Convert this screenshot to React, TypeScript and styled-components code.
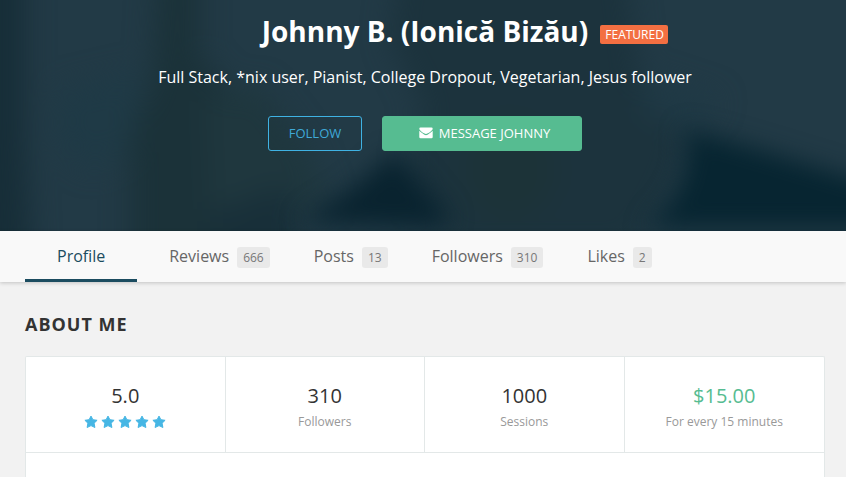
import React from "react";
import styled, { createGlobalStyle } from "styled-components";

const GlobalStyle = createGlobalStyle`
  *, *::before, *::after { box-sizing: border-box; }
  html, body { margin: 0; background: #f2f2f2; }
  body {
    font-family: "Open Sans", sans-serif;
    color: #333;
    overflow-x: hidden;
  }
  button, h1, h2, p, dl, dd, dt { margin: 0; font-family: inherit; }
`;

const Page = styled.div`
  min-height: 100vh;
  display: flex;
  flex-direction: column;
`;

const Hero = styled.header`
  position: relative;
  flex: none;
  display: flex;
  flex-direction: column;
  align-items: center;
  padding: 11px 21px 80px 25px;
  background: #223a46;
  color: #fff;
  text-align: center;
`;

const Backdrop = styled.svg`
  position: absolute;
  inset: 0;
  width: 100%;
  height: 100%;
`;

const Name = styled.h1`
  position: relative;
  font-size: 28px;
  line-height: 40px;
  font-weight: 700;
`;

const Featured = styled.span`
  position: absolute;
  left: 100%;
  top: 14px;
  margin-left: 12px;
  padding: 0 4px 0 5px;
  border-radius: 2px;
  background: #f36f42;
  font-size: 12px;
  line-height: 19px;
  font-weight: 400;
`;

const Headline = styled.p`
  position: relative;
  margin-top: 14px;
  font-size: 16px;
  line-height: 24px;
`;

const Actions = styled.div`
  position: relative;
  display: flex;
  gap: 20px;
  margin-top: 27px;
`;

const ActionButton = styled.button<{ $primary?: boolean }>`
  display: flex;
  align-items: center;
  justify-content: center;
  gap: 6px;
  width: ${(p) => (p.$primary ? 200 : 94)}px;
  height: 35px;
  padding: 0 0 1px ${(p) => (p.$primary ? 5 : 0)}px;
  border: 1px solid ${(p) => (p.$primary ? "#56bc91" : "#3fb2e3")};
  border-radius: 3px;
  background: ${(p) => (p.$primary ? "#56bc91" : "transparent")};
  color: ${(p) => (p.$primary ? "#fff" : "#3fa9d8")};
  font-size: 13px;
  line-height: 20px;
  font-weight: 400;
  cursor: pointer;
`;

const Tabs = styled.nav`
  position: relative;
  flex: none;
  display: flex;
  height: 51px;
  padding: 0 21px 0 25px;
  background: #f9f9f9;
  box-shadow: 0 1px 4px rgba(0, 0, 0, 0.2);
`;

const Tab = styled.a<{ $active?: boolean }>`
  display: flex;
  align-items: center;
  gap: 8px;
  padding: 2px ${(p) => (p.$active ? 32 : 12)}px 0 32px;
  border-bottom: 3px solid ${(p) => (p.$active ? "#1b4c60" : "transparent")};
  color: ${(p) => (p.$active ? "#1b4c60" : "#666")};
  font-size: 16px;
  line-height: 24px;
  text-decoration: none;
`;

const Count = styled.span`
  margin-top: 3px;
  padding: 0 6px;
  border-radius: 3px;
  background: #e9e9e9;
  color: #777;
  font-size: 12px;
  line-height: 21px;
`;

const Content = styled.main`
  flex: 1;
  display: flex;
  flex-direction: column;
  padding: 30px 21px 0 25px;
`;

const SectionTitle = styled.h2`
  font-size: 18px;
  line-height: 24px;
  font-weight: 700;
  letter-spacing: 1px;
`;

const Card = styled.section`
  flex: 1;
  margin-top: 20px;
  border: 1px solid #e3e8e8;
  border-bottom: 0;
  border-radius: 2px 2px 0 0;
  background: #fff;
`;

const Stats = styled.dl`
  display: grid;
  grid-template-columns: repeat(4, 1fr);
  border-bottom: 1px solid #e3e8e8;
`;

const Stat = styled.div`
  display: flex;
  flex-direction: column;
  align-items: center;
  height: 95px;
  padding-top: 24px;
  border-right: 1px solid #e3e8e8;
  &:last-child { border-right: 0; }
`;

const Value = styled.dd<{ $accent?: boolean }>`
  order: 1;
  font-size: 20px;
  line-height: 30px;
  color: ${(p) => (p.$accent ? "#56bc91" : "#333")};
`;

const Label = styled.dt`
  order: 2;
  font-size: 12px;
  line-height: 22px;
  color: #999;
`;

const Stars = styled.dt`
  order: 2;
  display: flex;
  gap: 3px;
  padding-top: 4px;
`;

function HeroBackdrop() {
  return (
    <Backdrop viewBox="0 0 846 231" preserveAspectRatio="none" aria-hidden="true">
      <defs>
        <filter id="soft" x="-50%" y="-50%" width="200%" height="200%" colorInterpolationFilters="sRGB">
          <feGaussianBlur stdDeviation="14" />
        </filter>
        <filter id="edge" x="-50%" y="-50%" width="200%" height="200%" colorInterpolationFilters="sRGB">
          <feGaussianBlur stdDeviation="12" />
        </filter>
      </defs>
      <rect width="846" height="231" fill="#223a46" />
      <g filter="url(#soft)">
        <path d="M-40-40H25V130L32 270H-40Z" fill="#172e38" />
        <path d="M60 90L145 70L130 150L90 170L55 140Z" fill="#1f3a46" />
        <path d="M158-40H200V55L245 105L300 160V270H130V140L152 80Z" fill="#1b3239" />
        <path d="M205 100L260 85L310 150L330 205L210 210Z" fill="#1f373e" />
        <path d="M400-40H625L640 80L680 130Q690 170 630 250H455Q400 190 410 145L425 110L390 40Z" fill="#1c333d" />
        <ellipse cx="510" cy="170" rx="45" ry="50" fill="#1c3338" />
        <path d="M210 215L285 185L300 250H210Z" fill="#182f39" />
        <path d="M645 75L720 100L690 135L640 110Z" fill="#1f3945" />
      </g>
      <g filter="url(#edge)">
        <path d="M300 222L350 190L395 152L415 175L450 218L440 228Z" fill="#09232f" />
        <path d="M684 128L760 150L846 176L900 190V228H645Q700 185 684 128Z" fill="#072531" />
      </g>
    </Backdrop>
  );
}

function Envelope() {
  return (
    <svg width="14" height="12" viewBox="0 0 14 12" aria-hidden="true">
      <path
        fill="#fff"
        d="M1.5.6h11A1.2 1.2 0 0 1 13.7 1.8C13.7 3.2 9 7 7 7S.3 3.2.3 1.8A1.2 1.2 0 0 1 1.5.6ZM.3 3.8C2.5 5.5 5 8.2 7 8.2S11.5 5.5 13.7 3.8v6.3a1.2 1.2 0 0 1-1.2 1.2h-11A1.2 1.2 0 0 1 .3 10.1Z"
      />
    </svg>
  );
}

function Star() {
  return (
    <svg width="14" height="14" viewBox="0 0 14 14" aria-hidden="true">
      <path
        fill="#46b6e4"
        stroke="#46b6e4"
        strokeWidth="1"
        strokeLinejoin="round"
        d="M7 1.1l1.9 3.6 4.2.6-3 2.9.8 4.3L7 10.6l-3.9 1.9.8-4.3L.9 5.3l4.2-.6Z"
      />
    </svg>
  );
}

const tabs = [
  { label: "Profile" },
  { label: "Reviews", count: 666 },
  { label: "Posts", count: 13 },
  { label: "Followers", count: 310 },
  { label: "Likes", count: 2 },
];

export default function App() {
  return (
    <Page>
      <GlobalStyle />
      <Hero>
        <HeroBackdrop />
        <Name>
          Johnny B. (Ionică Bizău)
          <Featured>FEATURED</Featured>
        </Name>
        <Headline>Full Stack, *nix user, Pianist, College Dropout, Vegetarian, Jesus follower</Headline>
        <Actions>
          <ActionButton type="button">FOLLOW</ActionButton>
          <ActionButton type="button" $primary>
            <Envelope />
            MESSAGE JOHNNY
          </ActionButton>
        </Actions>
      </Hero>
      <Tabs aria-label="Profile sections">
        {tabs.map(({ label, count }) => (
          <Tab
            key={label}
            href={`#${label.toLowerCase()}`}
            $active={count === undefined}
            aria-current={count === undefined ? "page" : undefined}
          >
            {label}
            {count !== undefined && <Count>{count}</Count>}
          </Tab>
        ))}
      </Tabs>
      <Content>
        <SectionTitle>ABOUT ME</SectionTitle>
        <Card>
          <Stats>
            <Stat>
              <Stars aria-label="Rating">
                {[1, 2, 3, 4, 5].map((n) => (
                  <Star key={n} />
                ))}
              </Stars>
              <Value>5.0</Value>
            </Stat>
            <Stat>
              <Label>Followers</Label>
              <Value>310</Value>
            </Stat>
            <Stat>
              <Label>Sessions</Label>
              <Value>1000</Value>
            </Stat>
            <Stat>
              <Label>For every 15 minutes</Label>
              <Value $accent>$15.00</Value>
            </Stat>
          </Stats>
        </Card>
      </Content>
    </Page>
  );
}
